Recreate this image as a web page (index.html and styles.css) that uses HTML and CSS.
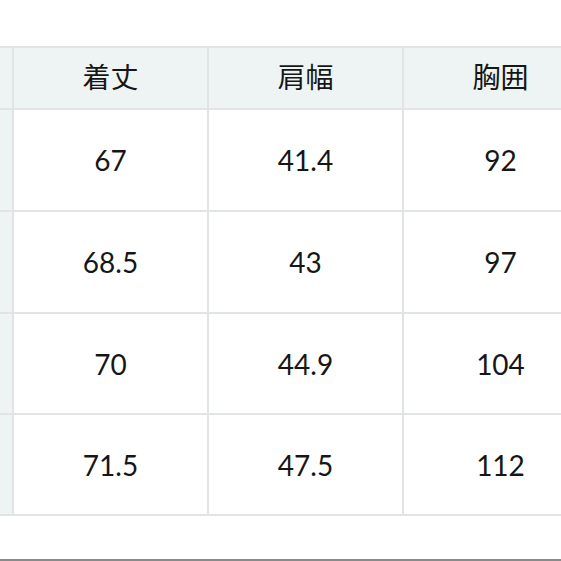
FILE: index.html
```html
<!DOCTYPE html>
<html lang="ja">
<head>
<meta charset="utf-8">
<link rel="stylesheet" href="styles.css">
</head>
<body>
<div class="page">
  <div class="size-table">
    <div class="cell head label"></div>
    <div class="cell head">着丈</div>
    <div class="cell head">肩幅</div>
    <div class="cell head">胸囲</div>

    <div class="cell label"></div>
    <div class="cell">67</div>
    <div class="cell">41.4</div>
    <div class="cell">92</div>

    <div class="cell label"></div>
    <div class="cell">68.5</div>
    <div class="cell">43</div>
    <div class="cell">97</div>

    <div class="cell label"></div>
    <div class="cell">70</div>
    <div class="cell">44.9</div>
    <div class="cell">104</div>

    <div class="cell label"></div>
    <div class="cell">71.5</div>
    <div class="cell">47.5</div>
    <div class="cell">112</div>
  </div>
  <div class="bottom-line"></div>
</div>
</body>
</html>
```
FILE: styles.css
```css
html, body {
  margin: 0;
  padding: 0;
  background: #ffffff;
  overflow: hidden;
}

.page {
  width: 561px;
  height: 561px;
  display: flex;
  flex-direction: column;
  overflow: hidden;
}

.size-table {
  margin-top: 46px;
  margin-left: -183px;
  width: max-content;
  display: grid;
  grid-template-columns: repeat(4, 193px);
  grid-template-rows: 60px 100px 100px 99px 99px;
  gap: 2px;
  padding: 2px;
  background: #e0e4e4;
  font-family: Lato, "Noto Sans CJK JP", sans-serif;
  font-size: 28px;
  color: #161616;
}

.cell {
  background: #ffffff;
  display: flex;
  align-items: center;
  justify-content: center;
}

.cell.head,
.cell.label {
  background: #eef4f4;
}

.cell.head {
  font-family: "Noto Sans CJK JP", sans-serif;
  font-size: 28px;
  padding-bottom: 4px;
  box-sizing: border-box;
}

.bottom-line {
  margin-top: auto;
  height: 2px;
  background: #8a8a8a;
}
```
